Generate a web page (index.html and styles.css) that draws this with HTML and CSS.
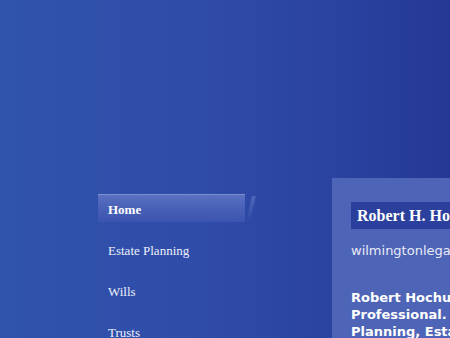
FILE: index.html
```html
<!DOCTYPE html>
<html>
<head>
<meta charset="utf-8">
<link rel="stylesheet" href="styles.css">
</head>
<body>
<div class="page">
  <nav class="nav">
    <a class="nav-item active" href="#">Home</a>
    <a class="nav-item" href="#">Estate Planning</a>
    <a class="nav-item" href="#">Wills</a>
    <a class="nav-item" href="#">Trusts</a>
  </nav>
  <main class="panel">
    <h1 class="title">Robert H. Hochuli, Attorney</h1>
    <p class="site">wilmingtonlegal.com</p>
    <p class="intro">Robert Hochuli is a Legal Professional. He practices Estate Planning, Estate Administration</p>
  </main>
</div>
</body>
</html>
```

FILE: styles.css
```css
html, body {
  margin: 0;
  padding: 0;
  height: 100%;
  overflow: hidden;
}
body {
  background: linear-gradient(to right, #3053ac 0%, #2f4ca8 45%, #2a42a0 75%, #243994 100%);
}
.page {
  display: flex;
  align-items: flex-start;
  padding: 178px 0 0 98px;
}
.nav {
  display: flex;
  flex-direction: column;
  gap: 13px;
  width: 147px;
  margin-top: 16px;
  flex-shrink: 0;
}
.nav-item {
  display: flex;
  align-items: center;
  height: 28px;
  padding: 4px 0 0 10px;
  box-sizing: border-box;
  font-family: "Liberation Serif", serif;
  font-size: 13px;
  color: #eef0fa;
  text-decoration: none;
  position: relative;
}
.nav-item.active {
  font-weight: bold;
  color: #ffffff;
  background: linear-gradient(to bottom, #5c72c2 0%, #4a62b8 45%, #3b54ae 100%);
  box-shadow: inset 0 1px 0 rgba(255,255,255,0.2);
}
.nav-item.active::after {
  content: "";
  position: absolute;
  right: -8px;
  top: 2px;
  width: 4px;
  height: 26px;
  background: linear-gradient(to bottom, rgba(120,140,210,0.45), rgba(80,100,180,0));
  transform: skewX(-12deg);
}
.panel {
  margin-left: 87px;
  width: 300px;
  flex-shrink: 0;
  background: #4e64b6;
  padding: 24px 0 0 19px;
  min-height: 200px;
}
.title {
  margin: 0;
  background: #2b409c;
  color: #ffffff;
  font-family: "Liberation Serif", serif;
  font-weight: bold;
  font-size: 16px;
  line-height: 26px;
  padding: 1px 6px 0;
  white-space: nowrap;
}
.site {
  margin: 13px 0 0;
  font-family: "DejaVu Sans", sans-serif;
  font-size: 13px;
  line-height: 18px;
  color: #e8ebf8;
  white-space: nowrap;
}
.intro {
  margin: 29px 0 0;
  width: 270px;
  font-family: "DejaVu Sans", sans-serif;
  font-weight: bold;
  font-size: 13px;
  line-height: 17px;
  color: #ffffff;
}
```
